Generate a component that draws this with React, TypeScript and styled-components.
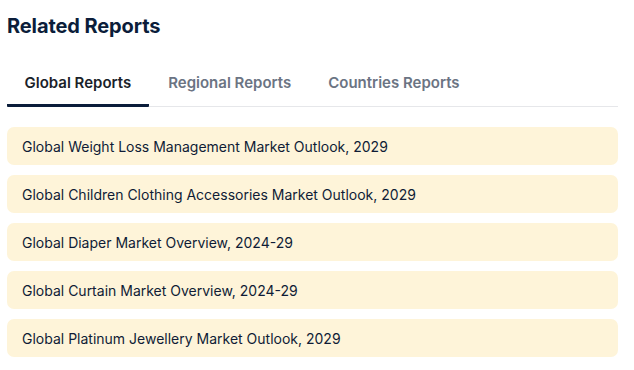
import React, { useState } from "react";
import styled, { createGlobalStyle } from "styled-components";

const GlobalStyle = createGlobalStyle`
  html, body { margin: 0; padding: 0; background: #ffffff; }
  body { font-family: Inter, "Noto Sans", sans-serif; -webkit-font-smoothing: antialiased; }
  * { box-sizing: border-box; }
`;

const Section = styled.section`
  width: 634px;
  padding: 13px 16px 0 7px;
  display: flex;
  flex-direction: column;
`;

const Title = styled.h2`
  margin: 0;
  font-size: 20px;
  line-height: 26px;
  font-weight: 700;
  color: #0b1d3a;
  letter-spacing: -0.1px;
`;

const TabBar = styled.div`
  display: flex;
  gap: 2px;
  margin-top: 19px;
  border-bottom: 1px solid #e6e7ea;
`;

const Tab = styled.button<{ $active?: boolean }>`
  appearance: none;
  background: none;
  border: 0;
  margin: 0 0 -1px;
  height: 49px;
  padding: 2px 17.5px 0;
  font-family: inherit;
  font-size: 15px;
  font-weight: 600;
  color: ${(p) => (p.$active ? "#1b1f2a" : "#6b7483")};
  border-bottom: 3px solid ${(p) => (p.$active ? "#0b1d3a" : "transparent")};
  border-radius: 0 0 1px 1px;
  cursor: pointer;
`;

const List = styled.ul`
  list-style: none;
  margin: 20px 0 0;
  padding: 0;
  display: flex;
  flex-direction: column;
  gap: 10px;
`;

const Item = styled.li`
  height: 38px;
  display: flex;
  align-items: center;
  padding: 0 15px;
  background: #fef4d9;
  border-radius: 7px;
  font-size: 14px;
  color: #0f1c36;
`;

const tabs = ["Global Reports", "Regional Reports", "Countries Reports"];
const reports = [
  "Global Weight Loss Management Market Outlook, 2029",
  "Global Children Clothing Accessories Market Outlook, 2029",
  "Global Diaper Market Overview, 2024-29",
  "Global Curtain Market Overview, 2024-29",
  "Global Platinum Jewellery Market Outlook, 2029",
];

export default function App() {
  const [active, setActive] = useState(0);
  return (
    <>
      <GlobalStyle />
      <Section>
        <Title>Related Reports</Title>
        <TabBar>
          {tabs.map((t, i) => (
            <Tab key={t} $active={i === active} onClick={() => setActive(i)}>
              {t}
            </Tab>
          ))}
        </TabBar>
        <List>
          {reports.map((r) => (
            <Item key={r}>{r}</Item>
          ))}
        </List>
      </Section>
    </>
  );
}
